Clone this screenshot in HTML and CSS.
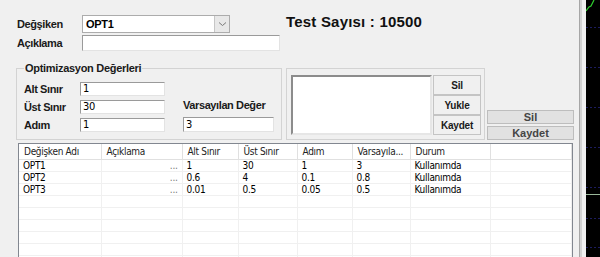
FILE: index.html
```html
<!DOCTYPE html>
<html lang="tr">
<head>
  <meta charset="UTF-8" />
  <title>Optimizasyon</title>
  <link rel="stylesheet" href="styles.css">
</head>
<body>
  <div class="window">
    <div class="form">
      <div class="top">
        <div class="fields">
          <div class="field-row">
            <span class="lbl name-lbl">Değşiken</span>
            <div class="combo">
              <span class="combo-text">OPT1</span>
              <span class="combo-btn">
                <svg width="9" height="6" viewBox="0 0 9 6"><path d="M1 1.5 L4.5 4.5 L8 1.5" fill="none" stroke="#7a7a7a" stroke-width="1"/></svg>
              </span>
            </div>
          </div>
          <div class="field-row">
            <span class="lbl name-lbl">Açıklama</span>
            <div class="edit desc"></div>
          </div>
        </div>
        <div class="test-count">Test Sayısı : 10500</div>
      </div>

      <div class="middle">
        <fieldset class="group opt">
          <legend>Optimizasyon Değerleri</legend>
          <div class="limits">
            <div class="limit-row"><span class="lbl limit-lbl">Alt Sınır</span><div class="edit small">1</div></div>
            <div class="limit-row"><span class="lbl limit-lbl">Üst Sınır</span><div class="edit small">30</div></div>
            <div class="limit-row"><span class="lbl limit-lbl">Adım</span><div class="edit small">1</div></div>
          </div>
          <div class="default">
            <span class="lbl">Varsayılan Değer</span>
            <div class="edit def">3</div>
          </div>
        </fieldset>

        <div class="group files">
          <div class="listbox"></div>
          <div class="file-btns">
            <button class="btn">Sil</button>
            <button class="btn">Yukle</button>
            <button class="btn">Kaydet</button>
          </div>
        </div>

        <div class="side-btns">
          <button class="flat">Sil</button>
          <button class="flat">Kaydet</button>
        </div>
      </div>

      <div class="listview">
        <table>
          <colgroup>
            <col style="width:82px"><col style="width:81px"><col style="width:56px"><col style="width:59px">
            <col style="width:55px"><col style="width:58px"><col style="width:80px"><col>
          </colgroup>
          <thead>
            <tr>
              <th>Değişken Adı</th><th>Açıklama</th><th>Alt Sınır</th><th>Üst Sınır</th>
              <th>Adım</th><th>Varsayıla...</th><th>Durum</th><th></th>
            </tr>
          </thead>
          <tbody>
            <tr><td>OPT1</td><td class="dots">...</td><td>1</td><td>30</td><td>1</td><td>3</td><td>Kullanımda</td><td></td></tr>
            <tr><td>OPT2</td><td class="dots">...</td><td>0.6</td><td>4</td><td>0.1</td><td>0.8</td><td>Kullanımda</td><td></td></tr>
            <tr><td>OPT3</td><td class="dots">...</td><td>0.01</td><td>0.5</td><td>0.05</td><td>0.5</td><td>Kullanımda</td><td></td></tr>
            <tr><td></td><td></td><td></td><td></td><td></td><td></td><td></td><td></td></tr>
            <tr><td></td><td></td><td></td><td></td><td></td><td></td><td></td><td></td></tr>
            <tr><td></td><td></td><td></td><td></td><td></td><td></td><td></td><td></td></tr>
            <tr><td></td><td></td><td></td><td></td><td></td><td></td><td></td><td></td></tr>
            <tr><td></td><td></td><td></td><td></td><td></td><td></td><td></td><td></td></tr>
            <tr><td></td><td></td><td></td><td></td><td></td><td></td><td></td><td></td></tr>
            <tr><td></td><td></td><td></td><td></td><td></td><td></td><td></td><td></td></tr>
          </tbody>
        </table>
      </div>
    </div>

    <div class="splitter"></div>

    <div class="chart">
      <svg width="14" height="257" viewBox="0 0 14 257">
        <g stroke="#1c1c5e" stroke-width="1" stroke-dasharray="2 2">
          <line x1="0" y1="27.5" x2="14" y2="27.5"/>
          <line x1="0" y1="67.5" x2="14" y2="67.5"/>
          <line x1="0" y1="107.5" x2="14" y2="107.5"/>
          <line x1="0" y1="147.5" x2="14" y2="147.5"/>
          <line x1="0" y1="187.5" x2="14" y2="187.5"/>
          <line x1="0" y1="218.5" x2="14" y2="218.5"/>
          <line x1="0" y1="247.5" x2="14" y2="247.5"/>
        </g>
        <line x1="0" y1="194.5" x2="14" y2="194.5" stroke="#9ab89a" stroke-width="1"/>
        <polyline points="0,11 3,7 5,6 8,0" fill="none" stroke="#2fd02f" stroke-width="1.2"/>
      </svg>
    </div>
  </div>
</body>
</html>
```

FILE: styles.css
```css
* {
  box-sizing: border-box;
}

body {
  margin: 0;
  background-color: #f0f0f0;
  font-family: 'Liberation Sans', Arial, sans-serif;
  font-size: 11px;
  color: #000;
}

.window {
  display: flex;
  width: 600px;
  height: 257px;
  overflow: hidden;
}

.form {
  width: 579px;
  flex-shrink: 0;
  padding: 15px 0 0 16px;
}

.lbl {
  font-weight: bold;
  font-size: 11px;
  letter-spacing: -0.4px;
  color: #1a1a1a;
}

/* top area */

.top {
  display: flex;
}

.fields {
  padding-left: 1px;
}

.field-row {
  display: flex;
  align-items: center;
}

.field-row + .field-row {
  margin-top: 2px;
}

.name-lbl {
  width: 65px;
}

.combo {
  display: flex;
  width: 148px;
  height: 18px;
  background: #fff;
  border: 1px solid #acacac;
}

.combo-text {
  flex: 1;
  padding: 2px 0 0 3px;
  font-weight: bold;
  letter-spacing: -0.3px;
}

.combo-btn {
  width: 15px;
  display: flex;
  align-items: center;
  justify-content: center;
  background: #e8e8e8;
  border-left: 1px solid #c6c6c6;
}

.edit {
  height: 15px;
  background: #fff;
  border: 1px solid;
  border-color: #9a9a9a #e3e3e3 #e3e3e3 #9a9a9a;
  padding-left: 2px;
  font-family: 'DejaVu Sans Condensed', 'Liberation Sans', sans-serif;
  font-size: 11px;
  line-height: 13px;
  letter-spacing: -0.3px;
}

.desc {
  width: 198px;
  height: 16px;
}

.test-count {
  margin: -2px 0 0 6px;
  font-size: 15px;
  line-height: 18px;
  font-weight: bold;
  letter-spacing: 0.2px;
  color: #111;
}

/* middle area */

.middle {
  display: flex;
  margin-top: 11px;
}

.group {
  border: 1px solid #d3d3d3;
  margin: 0;
}

.opt {
  display: flex;
  width: 266px;
  height: 78px;
  padding: 0 0 7px 7px;
}

.opt legend {
  padding: 0 1px;
  font-weight: bold;
  font-size: 11px;
  line-height: 13px;
  letter-spacing: -0.3px;
  color: #1a1a1a;
}

.limits {
  padding-top: 7px;
}

.limit-row {
  display: flex;
  align-items: center;
  height: 14px;
}

.limit-row + .limit-row {
  margin-top: 4px;
}

.limit-lbl {
  width: 56px;
}

.small {
  width: 85px;
  height: 14px;
  line-height: 12px;
}

.default {
  display: flex;
  flex-direction: column;
  justify-content: flex-end;
  margin-left: 18px;
}

.def {
  width: 91px;
  margin-top: 6px;
}

.files {
  display: flex;
  width: 199px;
  height: 72px;
  margin: 6px 0 0 4px;
  padding: 6px 0 0 4px;
}

.listbox {
  width: 141px;
  height: 60px;
  background: #fff;
  border: 2px solid;
  border-color: #8c8c8c #e6e6e6 #e6e6e6 #8c8c8c;
}

.file-btns {
  display: flex;
  flex-direction: column;
  margin-left: 1px;
}

.btn {
  width: 48px;
  height: 20px;
  margin: 0;
  padding: 0;
  background: #f0f0f0;
  border: 1px solid #c4c4c4;
  font-family: 'Liberation Sans', Arial, sans-serif;
  font-weight: bold;
  font-size: 10px;
  letter-spacing: -0.2px;
  color: #1a1a1a;
}

.side-btns {
  display: flex;
  flex-direction: column;
  justify-content: flex-end;
  gap: 2px;
  margin-left: 2px;
}

.flat {
  width: 87px;
  height: 14px;
  margin: 0;
  padding: 0;
  background: #e1e1e1;
  border: 1px solid #bdbdbd;
  font-family: 'Liberation Sans', Arial, sans-serif;
  font-weight: bold;
  font-size: 11px;
  line-height: 11px;
  color: #454545;
}

/* list view */

.listview {
  width: 555px;
  height: 120px;
  margin: 3px 0 0 2px;
  background: #fff;
  border: 1px solid #828790;
  overflow: hidden;
}

.listview table {
  width: 100%;
  table-layout: fixed;
  border-collapse: collapse;
  font-family: 'DejaVu Sans Condensed', 'Liberation Sans', sans-serif;
  font-size: 10px;
  letter-spacing: -0.3px;
}

.listview th {
  height: 15px;
  padding: 0 0 0 5px;
  text-align: left;
  font-weight: normal;
  color: #222;
  border-right: 1px solid #e0e0e0;
  border-bottom: 1px solid #e0e0e0;
  white-space: nowrap;
  overflow: hidden;
}

.listview td {
  height: 12px;
  padding: 0 0 0 4px;
  line-height: 11px;
  border-right: 1px solid #f0f0f0;
  border-bottom: 1px solid #f0f0f0;
  white-space: nowrap;
  overflow: hidden;
}

.listview td.dots {
  text-align: right;
  padding-right: 4px;
  color: #777;
}

/* right side */

.splitter {
  width: 7px;
  flex-shrink: 0;
  border-left: 1px solid #a6a6a6;
  background: linear-gradient(to right, #d2d2d2 2px, #f0f0f0 2px);
}

.chart {
  flex: 1;
  background: #000;
}

.chart svg {
  display: block;
}
```
